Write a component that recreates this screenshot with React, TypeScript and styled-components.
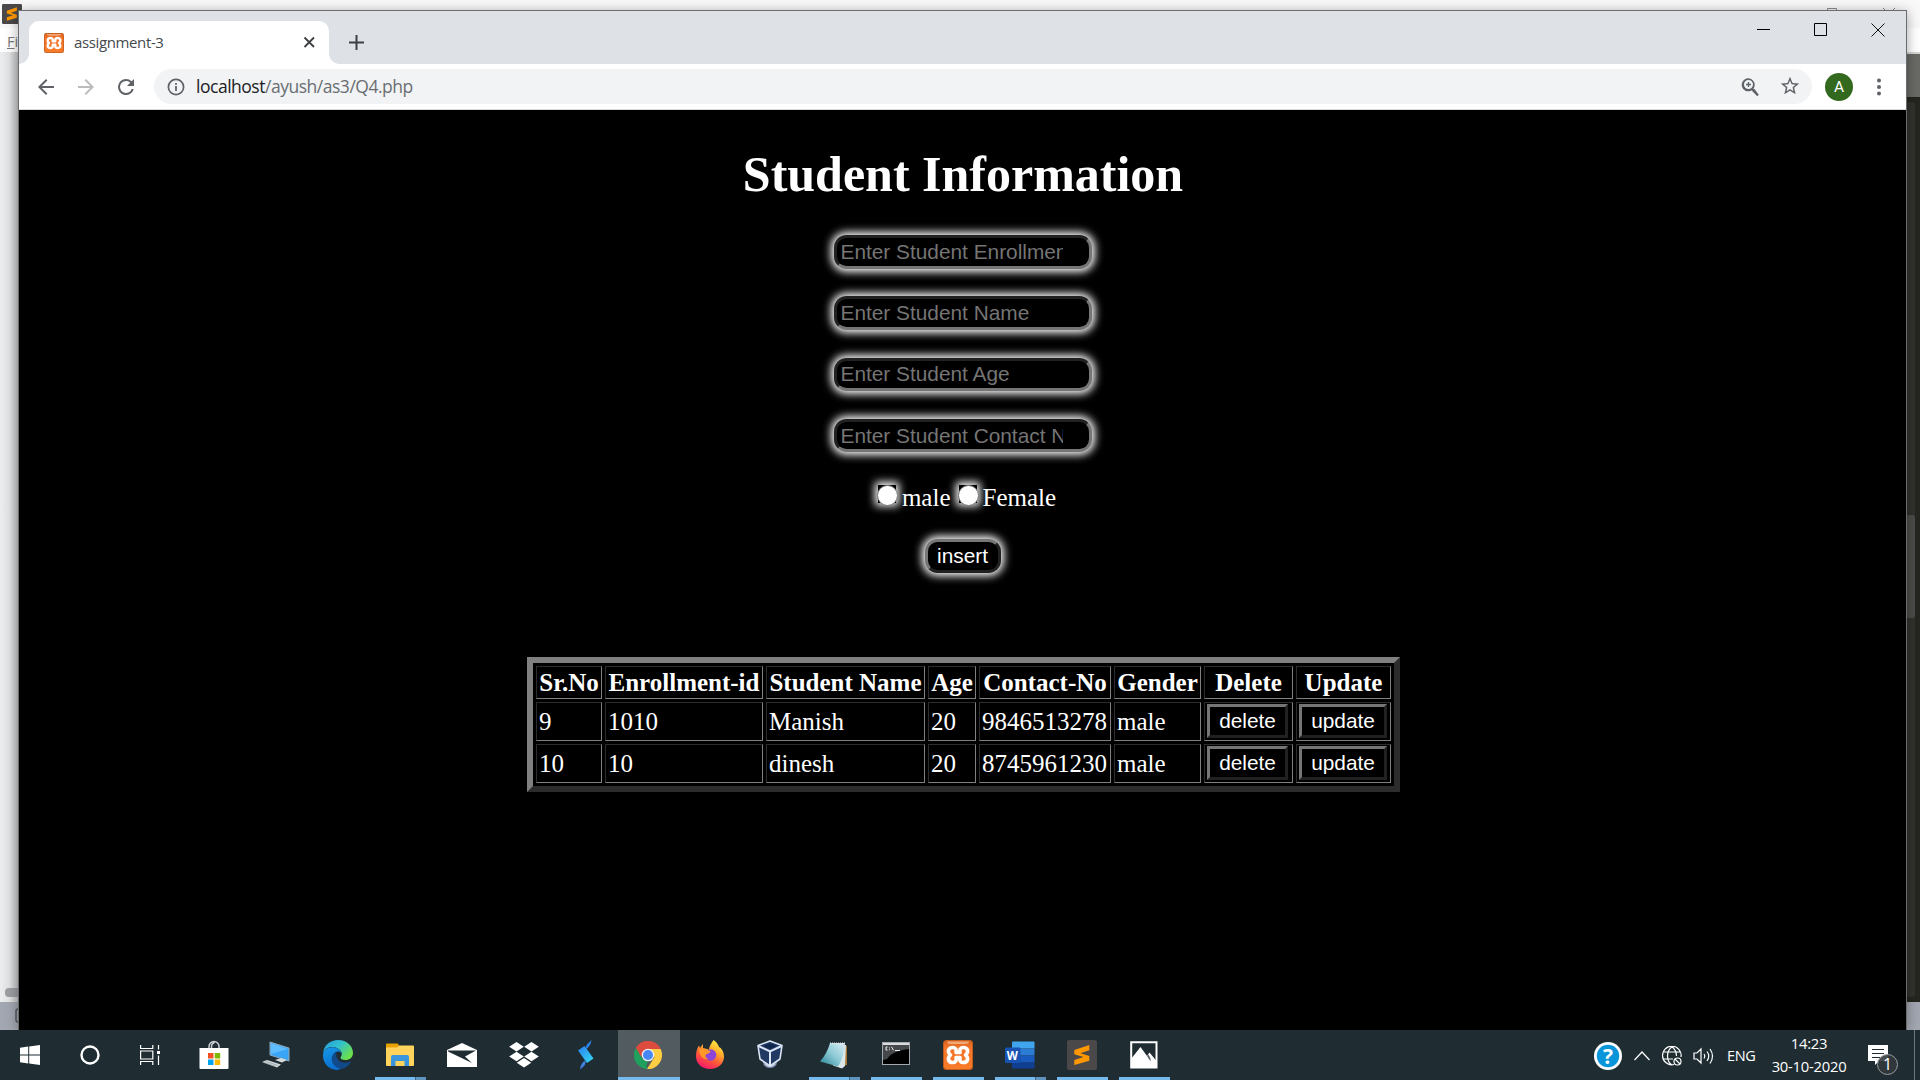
import React from 'react';
import styled, { createGlobalStyle } from 'styled-components';

const Global = createGlobalStyle`
  html, body { margin: 0; height: 100%; overflow: hidden; background: #000; }
  * { box-sizing: border-box; }
`;

const ui = `"Open Sans", "Noto Sans", sans-serif`;

const Desktop = styled.div`
  position: relative;
  width: 1920px;
  height: 1080px;
  overflow: hidden;
  display: flex;
  flex-direction: column;
`;

/* ---------- editor window behind the browser ---------- */
const Editor = styled.div`
  flex: 1;
  display: flex;
  flex-direction: column;
  background: #fff;
  font-family: ${ui};
`;
const EditorTitle = styled.div`
  height: 28px;
  padding: 4px 0 0 2px;
  display: flex;
  gap: 8px;
  color: #777;
  font-size: 15px;
  line-height: 16px;
  background: #f9f9f9;
`;
const EditorTitleText = styled.span`
  padding-top: 3px;
  font-size: 15px;
  letter-spacing: 0.6px;
  white-space: nowrap;
`;
const EditorControls = styled.div`
  margin-left: auto;
  padding: 4px 25px 0 0;
  display: flex;
  gap: 46px;
`;
const EditorMenu = styled.div`
  height: 24px;
  padding: 4px 0 0 7px;
  font-size: 14.5px;
  line-height: 20px;
  color: #777;
`;
const EditorBody = styled.div`
  flex: 1;
  display: flex;
  justify-content: space-between;
`;
const EditorSidebar = styled.div`
  width: 60px;
  background: linear-gradient(90deg, #ecedee 0, #e2e3e4 9px, #bfc0c1 19px);
  display: flex;
  flex-direction: column;
  justify-content: flex-end;
  padding: 0 0 5px 5px;
`;
const SidebarScroll = styled.div`
  height: 9px;
  border-radius: 4px;
  background: #9b9ea3;
`;
const EditorCode = styled.div`
  width: 60px;
  display: flex;
  flex-direction: column;
  background: #25261f;
`;
const CodeTabs = styled.div`
  height: 45px;
  background: #696965;
  border-top: 2px solid #d5d5d5;
`;
const CodeTrack = styled.div`
  flex: 1;
  width: 9px;
  margin: 5px 0 5px 46px;
  padding-top: 413px;
  border-radius: 3px;
  background: #32332e;
`;
const CodeThumb = styled.div`
  height: 103px;
  border-radius: 3px;
  background: #4d4e4b;
`;
const EditorStatus = styled.div`
  height: 28px;
  padding: 5px 0 0 15px;
  background: #a3a7b1;
`;

/* ---------- browser window ---------- */
const Browser = styled.div`
  position: absolute;
  left: 18px;
  top: 10px;
  width: 1889px;
  height: 1020px;
  border: 1px solid #6a6c6e;
  border-bottom: 0;
  background: #000;
  display: flex;
  flex-direction: column;
  box-shadow: 0 2px 12px rgba(0, 0, 0, 0.35);
`;
const TabStrip = styled.div`
  height: 53px;
  background: #dee1e6;
  display: flex;
  align-items: flex-end;
  font-family: ${ui};
`;
const TabCurve = styled.div<{ $side: 'left' | 'right' }>`
  width: 10px;
  height: 10px;
  background: radial-gradient(circle at ${p => (p.$side === 'left' ? '0 0' : '10px 0')}, transparent 9.5px, #fff 10px);
`;
const Tab = styled.div`
  width: 300px;
  height: 43px;
  padding: 0 13px 0 15px;
  border-radius: 10px 10px 0 0;
  background: #fff;
  display: flex;
  align-items: center;
`;
const TabTitle = styled.span`
  flex: 1;
  margin: 0 0 2px 10px;
  font-size: 15px;
  letter-spacing: -0.37px;
  color: #45494d;
`;
const NewTab = styled.div`
  height: 43px;
  margin-left: 10px;
  display: flex;
  align-items: center;
`;
const WindowControls = styled.div`
  height: 53px;
  margin-left: auto;
  padding: 12px 21px 0 0;
  display: flex;
  gap: 43.5px;
`;
const Toolbar = styled.div`
  height: 46px;
  padding: 0 17px 0 15px;
  background: #fff;
  border-bottom: 1px solid #d9dbdd;
  display: flex;
  align-items: center;
  font-family: ${ui};
`;
const NavButtons = styled.div`
  width: 120px;
  display: flex;
  align-items: center;
  gap: 16px;
`;
const Omnibox = styled.div`
  width: 1658px;
  height: 35px;
  padding: 0 11px 0 13px;
  border-radius: 18px;
  background: #f1f3f4;
  display: flex;
  align-items: center;
`;
const Url = styled.span`
  flex: 1;
  margin: 0 0 1px 11px;
  font-size: 17.5px;
  letter-spacing: -0.48px;
  color: #6a6e72;
  b { font-weight: 400; color: #202124; }
`;
const OmniIcons = styled.div`
  display: flex;
  gap: 16px;
`;
const Avatar = styled.div`
  width: 28px;
  height: 28px;
  margin-left: 13px;
  border-radius: 50%;
  background: #33691e;
  color: #fff;
  font: 15.5px/28px Roboto, sans-serif;
  text-align: center;
`;
const MenuDots = styled.div`
  margin-left: auto;
  display: flex;
`;

/* ---------- page ---------- */
const Page = styled.main`
  flex: 1;
  background: #000;
  color: #fff;
  display: flex;
  flex-direction: column;
  align-items: center;
  font: 25px/29px "Liberation Serif", "Times New Roman", serif;
`;
const Heading = styled.h1`
  margin: 36px 0 32px 1px;
  font-size: 50px;
  line-height: 57px;
  font-weight: 700;
`;
const Form = styled.form`
  display: flex;
  flex-direction: column;
  align-items: center;
`;
const Field = styled.input`
  width: 258px;
  height: 33.5px;
  margin-bottom: 27.8px;
  padding: 0 26px 0 4px;
  border: 3px solid;
  border-color: #212121 #767676 #767676 #212121;
  border-radius: 12.5px;
  background: #000;
  color: #fff;
  font: 20.83px "Liberation Sans", Arial, sans-serif;
  box-shadow: 0 0 8px 3px #fff;
  outline: none;
  &::placeholder { color: #757575; opacity: 1; }
`;
const Genders = styled.div`
  height: 29px;
  margin: 3px 0 0 9px;
  display: flex;
  gap: 8px;
`;
const GenderLabel = styled.label`
  display: flex;
  gap: 6px;
`;
const Radio = styled.span`
  width: 18px;
  height: 18px;
  margin-top: 2px;
  background: #000;
  box-shadow: 0 0 8px 3px #fff;
  &::before {
    content: '';
    display: block;
    width: 19px;
    height: 19px;
    margin: -0.5px;
    border: 1px solid #767676;
    border-radius: 50%;
    background: #fff;
  }
`;
const Button = styled.button<{ $glow?: boolean; $w: number }>`
  display: block;
  width: ${p => p.$w}px;
  height: 34px;
  padding: 0;
  border: 3px solid;
  border-color: #767676 #212121 #212121 #767676;
  border-radius: ${p => (p.$glow ? '12.5px' : '0')};
  background: #000;
  color: #fff;
  font: 20.83px "Liberation Sans", Arial, sans-serif;
  box-shadow: ${p => (p.$glow ? '0 0 8px 3px #fff' : 'none')};
`;
const Submit = styled.div`
  margin-top: 27px;
`;
const Table = styled.table`
  width: 873px;
  margin: 84px 0 0 2px;
  table-layout: fixed;
  border: 6px solid;
  border-color: #808080 #2c2c2c #2c2c2c #808080;
  border-collapse: separate;
  border-spacing: 3px;
`;
const Row = styled.tr<{ $h: number }>`
  height: ${p => p.$h}px;
`;
const cell = `
  padding: 1px 2px 2px;
  border: 1px solid;
  border-color: #2c2c2c #808080 #808080 #2c2c2c;
  white-space: nowrap;
`;
const Th = styled.th`
  ${cell}
  padding: 0;
  text-align: center;
`;
const Td = styled.td`
  ${cell}
`;

/* ---------- taskbar ---------- */
const Taskbar = styled.div`
  position: relative;
  height: 50px;
  background: #1f2d33;
  display: flex;
  color: #fff;
  font-family: ${ui};
`;
const Slot = styled.div<{ $w?: number; $active?: boolean }>`
  width: ${p => p.$w ?? 62}px;
  height: 50px;
  background: ${p => (p.$active ? '#515b60' : 'transparent')};
  display: flex;
  flex-direction: column;
  align-items: center;
`;
const IconBox = styled.div`
  height: 47px;
  padding-top: 3px;
  display: flex;
  align-items: center;
  margin-right: 1px;
`;
const AppIcon = styled(IconBox)`
  padding-top: 2px;
  margin-right: 2px;
`;
const RunBar = styled.div<{ $w: number; $split?: boolean }>`
  width: ${p => p.$w}px;
  height: 3px;
  margin-right: ${p => (p.$w > 60 ? 0 : 1)}px;
  background: ${p => (p.$split ? 'linear-gradient(90deg, #76b9ed 40px, #3f6684 40px, #3f6684 41px, #5f94bd 41px)' : '#76b9ed')};
`;
const Start = styled.div`
  width: 184px;
  display: flex;
`;
const Tray = styled.div`
  margin-left: auto;
  width: 326px;
  display: flex;
  align-items: center;
`;
const TrayIcons = styled.div`
  display: flex;
  align-items: center;
  gap: 11px;
  padding-top: 1px;
`;
const Lang = styled.span`
  width: 28px;
  margin-left: 12px;
  font-size: 14.5px;
  letter-spacing: -0.4px;
  white-space: nowrap;
`;
const Clock = styled.div`
  width: 76px;
  margin-left: 16px;
  text-align: center;
  font-size: 14.8px;
  letter-spacing: -0.25px;
  line-height: 23px;
  white-space: nowrap;
`;
const Notify = styled.div`
  position: relative;
  margin-left: 21px;
  height: 50px;
  padding-top: 15px;
`;
const Badge = styled.span`
  position: absolute;
  left: 9px;
  top: 24px;
  width: 21px;
  height: 21px;
  border: 1px solid #999da0;
  border-radius: 50%;
  background: rgba(50, 56, 60, 0.9);
  font-size: 16px;
  line-height: 19px;
  text-align: center;
`;
const ShowDesktop = styled.div`
  width: 6px;
  height: 50px;
  margin-left: auto;
  border-left: 1px solid #6d777b;
`;

/* ---------- icons ---------- */
const Xampp = ({ s = 30 }: { s?: number }) => (
  <svg width={s} height={s} viewBox="0 0 30 30">
    <defs>
      <linearGradient id="xg" x1="0" y1="0" x2="0" y2="1">
        <stop offset="0" stopColor="#d9651f" /><stop offset=".25" stopColor="#f4752a" /><stop offset="1" stopColor="#f87b28" />
      </linearGradient>
    </defs>
    <rect width="30" height="30" rx="3.5" fill="#c05c1c" />
    <rect x="1" y="1" width="28" height="28" rx="3" fill="url(#xg)" />
    <path d="M4 1.500h22q0 2.500-4 2.500H8Q4 4 4 1.500z" fill="#f3a777" />
    <path d="M10 7.500C5 7.500 4 12 7.500 15 4 18 5 22.500 10 22.500 13 22.500 13.500 20 13 17.500H17C16.500 20 17 22.500 20 22.500 25 22.500 26 18 22.500 15 26 12 25 7.500 20 7.500 17 7.500 16.500 10 17 12.500H13C13.500 10 13 7.500 10 7.500z" fill="none" stroke="#fff" strokeWidth="3.600" strokeLinejoin="round" />
  </svg>
);

const Sublime = ({ s = 30 }: { s?: number }) => (
  <svg width={s} height={s} viewBox="0 0 30 30">
    <rect width="30" height="30" rx="2" fill="#4a4848" />
    <path d="M7.300 10 22.300 5v5.300l-9 3 9 2.700v4.800L7.300 25v-5l9.200-3-9.200-2.800z" fill="#ff9800" />
  </svg>
);

const WinLogo = () => (
  <svg width="20" height="20" viewBox="0 0 20 20" fill="#fff">
    <path d="M0 2.700 8.200 1.500V9.400H0zM9.200 1.400 20 0V9.400H9.200zM0 10.400H8.200v8L0 17.200zM9.200 10.400H20V20L9.200 18.600z" />
  </svg>
);
const TaskView = () => (
  <svg width="21" height="20" viewBox="0 0 21 20" fill="none" stroke="#fff" strokeWidth="1.200">
    <path d="M.6 0v3.500h12.200V0M.6 20v-3.500h12.200V20M.6 6h12.200v8H.6zM18.500 0v4.500M18.500 10.500V20" />
    <path d="M17 6h3v3h-3z" fill="#fff" stroke="none" />
  </svg>
);
const Store = () => (
  <svg width="30" height="30" viewBox="0 0 30 30">
    <path d="M10 8V6.500a5 5 0 0 1 10 0V8M12.500 8V6a4 4 0 0 1 3-3.500" fill="none" stroke="#c9ced0" strokeWidth="1.500" />
    <path d="M.5 8h29v20a1 1 0 0 1-1 1h-27a1 1 0 0 1-1-1z" fill="#fff" />
    <path d="M9 13h5.500v5.500H9z" fill="#f25022" /><path d="M15.700 13h5.500v5.500h-5.500z" fill="#7fba00" />
    <path d="M9 19.500h5.500V25H9z" fill="#00a4ef" /><path d="M15.700 19.500h5.500V25h-5.500z" fill="#ffb900" />
  </svg>
);
const Computer = () => (
  <svg width="30" height="28" viewBox="0 0 30 28">
    <path d="M9 1 28 7v13L9 14z" fill="#3aa5f5" stroke="#90a7b5" strokeWidth="1" />
    <path d="m10 2 17 6-17 5z" fill="#5fbcff" />
    <path d="m14 19 6-2 6 2-5 2.500zM1 21l5-2 14 4.500-4 3z" fill="#d5dadd" />
    <path d="m5 20.500 12 4M3 21.500l12 4" stroke="#8d979d" strokeWidth=".7" />
  </svg>
);
const Edge = () => (
  <svg width="30" height="30" viewBox="0 0 30 30">
    <defs>
      <linearGradient id="e1" x1="0" y1="0" x2="1" y2=".6">
        <stop offset="0" stopColor="#259bd9" /><stop offset=".5" stopColor="#30bfd0" /><stop offset="1" stopColor="#6ae04b" />
      </linearGradient>
      <linearGradient id="e2" x1="0" y1="0" x2=".4" y2="1">
        <stop offset="0" stopColor="#1598e8" /><stop offset="1" stopColor="#0a6fd0" />
      </linearGradient>
    </defs>
    <path d="M0 13C1 5 7.500 0 15 0 24 0 30 6 30 13c0 4.500-3.500 7-7.500 7-3.500 0-5.300-1.500-5-2.500.4-.8 1.300-1.700 1.300-3.700C18.800 10 14 7 9 7 4.500 7 1.500 9.500 0 13z" fill="url(#e1)" />
    <path d="M0 15.500C0 10 4.500 7.300 9 7.300c5 0 9 2.700 9.500 6-1-1.300-2.500-2-4-1.800-3.500.5-6 4.500-4.500 9 1.200 4 4.500 7 9 7.500-1.500 1-3 1.700-5 1.900C6 29.800 0 23.500 0 15.500z" fill="url(#e2)" />
    <path d="M13.500 12.200C8 14 7.500 21 11 25c2.200 2.800 5.500 4.200 9 3.600 3.500-1.300 6-3.500 7.600-6.200.3-.6-.1-1-.7-.7C19 25 12 20 13.500 12.200z" fill="#114a8b" />
  </svg>
);
const Explorer = () => (
  <svg width="28" height="24" viewBox="0 0 28 24">
    <path d="M0 1.500Q0 .5 1 .5h10.500l1.500 1.500-1.500 3H0z" fill="#e8a200" />
    <path d="M0 4.500h11L13 2.500h14a1 1 0 0 1 1 1V22a1 1 0 0 1-1 1H1a1 1 0 0 1-1-1z" fill="#ffd35c" />
    <path d="M5 23V14a2 2 0 0 1 2-2h14a2 2 0 0 1 2 2v9h-4.500v-5h-9v5z" fill="#3a95dd" />
  </svg>
);
const Mail = () => (
  <svg width="30" height="24" viewBox="0 0 30 24">
    <path d="M0 7 15 0l15 7v17H0z" fill="#fff" /><path d="M1 7.500h28l-11 6 7 6.500L1 8.500z" fill="#1f2d33" />
  </svg>
);
const Dropbox = () => (
  <svg width="30" height="26" viewBox="0 0 30 26" fill="#fff">
    <path d="m7.500 0 7.300 4.700-7.300 4.700L.2 4.700zM22.500 0l7.300 4.700-7.300 4.700-7.300-4.700zM7.500 9.800l7.300 4.700-7.300 4.700-7.300-4.700zM22.500 9.800l7.300 4.700-7.300 4.700-7.300-4.700zM15 16l7.300 4.700-7.300 4.700-7.300-4.700z" />
  </svg>
);
const SApp = () => (
  <svg width="16" height="30" viewBox="0 0 16 30">
    <defs><linearGradient id="sg" x1="0" y1="0" x2="1" y2="1"><stop offset="0" stopColor="#2b7ff0" /><stop offset="1" stopColor="#35dcf5" /></linearGradient></defs>
    <path d="M13.500 0C13 4 11.500 6.500 8.500 9 7.500 7.500 8 6 9 4.500 10 3 12 2 13.500 0z" fill="#2c86e8" />
    <path d="M0 10.500 6.500 6l9 12.500L9 23z" fill="url(#sg)" />
    <path d="M2 29.500C2.500 25 4 22 7 20.500c1 1.500.5 3.500-.5 5C5.500 27 3.500 28 2 29.500z" fill="#3f7fe0" />
  </svg>
);
const Chrome = () => (
  <svg width="28" height="28" viewBox="0 0 28 28">
    <path d="M1.900 7A14 14 0 0 1 26.100 7L14 14z" fill="#dd4b3e" />
    <path d="M1.900 7 8.500 17.500 14 28A14 14 0 0 1 1.900 7z" fill="#1fa05c" />
    <path d="M26.700 8A14 14 0 0 1 13 28l7.500-12L14 8z" fill="#ffcd42" />
    <path d="M1.900 7A14 14 0 0 1 26.700 8H14l-7 8z" fill="#dd4b3e" />
    <path d="M1.900 7 8 17.500 14 20.500l-3 7.200A14 14 0 0 1 1.900 7z" fill="#1fa05c" />
    <circle cx="14" cy="14" r="6.300" fill="#f1f1f1" /><circle cx="14" cy="14" r="5" fill="#4687f4" />
  </svg>
);
const Firefox = () => (
  <svg width="30" height="30" viewBox="0 0 30 30">
    <defs>
      <linearGradient id="ff" x1=".8" y1="0" x2=".3" y2="1"><stop offset="0" stopColor="#fff44f" /><stop offset=".35" stopColor="#ffb02a" /><stop offset=".65" stopColor="#ff5a38" /><stop offset="1" stopColor="#f5156c" /></linearGradient>
    </defs>
    <path d="M18.500 0c3 2 4.500 4 5.500 7 2.500 1 5 5 5 9.500C29 24 23 29 15 29S1 23.500 1 16.500C1 12 2 8 4 5.500L5 8l3-4v4l6 1.500C14.500 5.500 16.500 3 18.500 0z" fill="url(#ff)" />
    <circle cx="15.500" cy="15" r="5.800" fill="#8c45d8" />
    <path d="M4 10c3-2 6-1.500 8 0l3.500 1c0 2-3 2.500-4.500 3.500-1.500 2 .5 4 2.500 4.500-3 1-7-1-8-4z" fill="#ff9826" />
  </svg>
);
const VBox = () => (
  <svg width="30" height="29" viewBox="0 0 30 29">
    <path d="M6 22c0 8 14 8 14 0z" fill="#7283a8" /><path d="M8 24c1 3 9 3 10 0" stroke="#dfe7f5" fill="none" />
    <path d="M13 1 25 5.500 23 19l-10 7L3 19 1 5.500z" fill="#213a63" stroke="#dbe5f3" strokeWidth="1.600" strokeLinejoin="round" />
    <path d="M1.500 6 13 11.500 24.500 6M13 11.500V26" stroke="#dbe5f3" strokeWidth="2" fill="none" />
    <path d="m13 3.500 7 2.500-7 3-7-3z" fill="#10254a" />
  </svg>
);
const Notepad = () => (
  <svg width="28" height="28" viewBox="0 0 28 28">
    <defs><linearGradient id="np" x1="0" y1="1" x2="1" y2="0"><stop offset="0" stopColor="#237f91" /><stop offset=".5" stopColor="#8bc9d6" /><stop offset="1" stopColor="#d7edf2" /></linearGradient></defs>
    <path d="m24 4 3 1v19l-5 1z" fill="#a9772e" />
    <path d="M10 2 26 4l-1 21-3 2.500-9-3z" fill="#dbe6e8" />
    <path d="M10 2h14.500c0 8-2 17-6.500 23.500L0 20.500C5 15 8 9 10 2z" fill="url(#np)" />
    <path d="M10 2.500h15" stroke="#e5e5e5" strokeWidth="2" strokeDasharray="1 1" />
  </svg>
);
const Cmd = () => (
  <svg width="28" height="25" viewBox="0 0 28 25">
    <rect x=".5" y=".5" width="27" height="22" fill="#000" stroke="#a5a9ab" />
    <path d="M1 3h26v4C17 8 9 11 5 17l-4 1z" fill="#45494b" /><path d="M1 1h26v2H1z" fill="#d9dcde" />
    <path d="M5.500 5H4v3h1.500M7.500 5.500v.8M7.500 7.300v.8M9.500 4.800l2 3.500M13 8.500h5" stroke="#eee" fill="none" />
  </svg>
);
const WordLetter = styled.text`
  font: 700 11.5px "Open Sans", sans-serif;
  fill: #fff;
`;
const Word = () => (
  <svg width="30" height="28" viewBox="0 0 30 28">
    <path d="M7 1.500Q7 .5 8 .5h20.500q1 0 1 1V7.500H7z" fill="#41a5ee" /><path d="M7 7.500h22.500v7H7z" fill="#2b7cd3" />
    <path d="M7 14.500h22.500v7H7z" fill="#185abd" /><path d="M7 21.500h22.500v5q0 1-1 1H8q-1 0-1-1z" fill="#103f91" />
    <rect y="6.500" width="15.500" height="15.500" rx="1.200" fill="#1853b3" />
    <WordLetter x="1.700" y="18.500">W</WordLetter>
  </svg>
);
const Photos = () => (
  <svg width="28" height="28" viewBox="0 0 28 28">
    <path d="M1.200 1.200h25.300v25.300H1.200z" fill="#1f2d33" stroke="#fff" strokeWidth="2" />
    <path d="M1 18 10.500 6 17 15l2.500-3.500L26.500 20v7H1z" fill="#fff" />
    <path d="m17 15 3.500 5.500v-3l-2-4z" fill="#5b666b" />
  </svg>
);
const QMark = styled.text`
  font: 700 21px "Open Sans", sans-serif;
  fill: #fff;
`;
const Help = () => (
  <svg width="28" height="28" viewBox="0 0 28 28">
    <circle cx="14" cy="14" r="14" fill="#fff" /><circle cx="14" cy="14" r="11.200" fill="#0a94d9" />
    <QMark x="14" y="21.500" textAnchor="middle">?</QMark>
  </svg>
);
const TrayGlyph = ({ w, d, h = 20 }: { w: number; h?: number; d: string }) => (
  <svg width={w} height={h} viewBox={`0 0 ${w} ${h}`} fill="none" stroke="#fff" strokeWidth="1.200"><path d={d} /></svg>
);
const Glyph = ({ d, color = '#5f6368', s = 24 }: { d: string; color?: string; s?: number }) => (
  <svg width={s} height={s} viewBox="0 0 24 24" fill={color}><path d={d} /></svg>
);
const Info = () => (
  <svg width="18" height="18" viewBox="0 0 18 18">
    <circle cx="9" cy="9" r="7.600" fill="none" stroke="#5f6368" strokeWidth="1.700" />
    <path d="M8.100 8h1.800v5H8.100zM8.100 5h1.800v1.800H8.100z" fill="#5f6368" />
  </svg>
);

const fields = ['Enter Student Enrollment', 'Enter Student Name', 'Enter Student Age', 'Enter Student Contact No'];
const columns: [string, number][] = [
  ['Sr.No', 66], ['Enrollment-id', 158], ['Student Name', 159], ['Age', 48],
  ['Contact-No', 132], ['Gender', 87], ['Delete', 89], ['Update', 95],
];
const students = [
  ['9', '1010', 'Manish', '20', '9846513278', 'male'],
  ['10', '10', 'dinesh', '20', '8745961230', 'male'],
];
const apps: { icon: React.ReactNode; bar?: 'one' | 'split' | 'active' }[] = [
  { icon: <Store /> }, { icon: <Computer /> }, { icon: <Edge /> }, { icon: <Explorer />, bar: 'split' },
  { icon: <Mail /> }, { icon: <Dropbox /> }, { icon: <SApp /> }, { icon: <Chrome />, bar: 'active' },
  { icon: <Firefox /> }, { icon: <VBox /> }, { icon: <Notepad />, bar: 'split' }, { icon: <Cmd />, bar: 'one' },
  { icon: <Xampp />, bar: 'one' }, { icon: <Word />, bar: 'split' }, { icon: <Sublime />, bar: 'one' }, { icon: <Photos />, bar: 'one' },
];

export default function App() {
  return (
    <Desktop>
      <Global />
      <Editor>
        <EditorTitle>
          <Sublime s={20} />
          <EditorTitleText>C:\xampp\htdocs\ayush\as3\Q4.php - Sublime Text (UNREGISTERED)</EditorTitleText>
          <EditorControls>
            <svg width="10" height="10"><path d="M.5.5h9v9h-9z" fill="none" stroke="#888" /></svg>
            <svg width="12" height="12"><path d="m0 0 12 12M12 0 0 12" stroke="#888" /></svg>
          </EditorControls>
        </EditorTitle>
        <EditorMenu><u>F</u>ile</EditorMenu>
        <EditorBody>
          <EditorSidebar><SidebarScroll /></EditorSidebar>
          <EditorCode>
            <CodeTabs />
            <CodeTrack><CodeThumb /></CodeTrack>
          </EditorCode>
        </EditorBody>
        <EditorStatus>
          <svg width="20" height="18"><rect x="1" y="2" width="18" height="13" rx="2" fill="none" stroke="#565a60" strokeWidth="1.500" /></svg>
        </EditorStatus>
      </Editor>

      <Browser>
        <TabStrip>
          <TabCurve $side="left" />
          <Tab>
            <Xampp s={20} />
            <TabTitle>assignment-3</TabTitle>
            <svg width="13" height="13"><path d="m1.500 1.500 9.500 9.500M11 1.500 1.500 11" stroke="#3c4043" strokeWidth="1.800" /></svg>
          </Tab>
          <TabCurve $side="right" />
          <NewTab><svg width="15" height="15"><path d="M7.500 0v15M0 7.500h15" stroke="#3c4043" strokeWidth="2" /></svg></NewTab>
          <WindowControls>
            <svg width="13" height="13"><path d="M0 6.500h13" stroke="#000" /></svg>
            <svg width="14" height="13"><path d="M.5.5h12v12H.500z" fill="none" stroke="#000" /></svg>
            <svg width="14" height="14"><path d="m.5.5 13 13M13.500.5l-13 13" stroke="#111" /></svg>
          </WindowControls>
        </TabStrip>
        <Toolbar>
          <NavButtons>
            <Glyph d="M20 11H7.830l5.590-5.590L12 4l-8 8 8 8 1.410-1.410L7.830 13H20v-2z" />
            <Glyph color="#babcbe" d="M12 4l-1.410 1.410L16.170 11H4v2h12.170l-5.580 5.590L12 20l8-8z" />
            <Glyph d="M17.650 6.350A7.960 7.960 0 0 0 12 4a8 8 0 1 0 7.730 10h-2.080A6 6 0 1 1 12 6c1.660 0 3.140.69 4.220 1.780L13 11h7V4l-2.350 2.350z" />
          </NavButtons>
          <Omnibox>
            <Info />
            <Url><b>localhost</b>/ayush/as3/Q4.php</Url>
            <OmniIcons>
              <Glyph d="M15.500 14h-.79l-.28-.27A6.500 6.500 0 1 0 13 15.140l.28.27v.79l5 5 1.490-1.490-4.270-5.710zM9.500 14a4.500 4.500 0 1 1 0-9 4.500 4.500 0 0 1 0 9zM10.200 7H8.800v1.800H7v1.400h1.800V12h1.400v-1.800H12V8.800h-1.800z" />
              <Glyph d="M22 9.240l-7.190-.62L12 2 9.190 8.630 2 9.240l5.460 4.730L5.820 21 12 17.270 18.180 21l-1.630-7.030L22 9.240zM12 15.400l-3.760 2.270 1-4.280-3.320-2.880 4.380-.38L12 6.100l1.710 4.040 4.380.38-3.320 2.880 1 4.280L12 15.400z" s={22} />
            </OmniIcons>
          </Omnibox>
          <Avatar>A</Avatar>
          <MenuDots><svg width="20" height="18" fill="#5f6368"><circle cx="10" cy="2.500" r="2" /><circle cx="10" cy="9" r="2" /><circle cx="10" cy="15.500" r="2" /></svg></MenuDots>
        </Toolbar>
        <Page>
          <Heading>Student Information</Heading>
          <Form>
            {fields.map(f => <Field key={f} placeholder={f} />)}
            <Genders>
              <GenderLabel><Radio />male</GenderLabel>
              <GenderLabel><Radio />Female</GenderLabel>
            </Genders>
            <Submit><Button type="button" $glow $w={76}>insert</Button></Submit>
          </Form>
          <Table>
            <colgroup>{columns.map(([n, w]) => <col key={n} width={w} />)}</colgroup>
            <thead><Row $h={33}>{columns.map(([n]) => <Th key={n}>{n}</Th>)}</Row></thead>
            <tbody>
              {students.map(s => (
                <Row key={s[0]} $h={39}>
                  {s.map((v, i) => <Td key={i}>{v}</Td>)}
                  <Td><Button $w={81}>delete</Button></Td>
                  <Td><Button $w={88}>update</Button></Td>
                </Row>
              ))}
            </tbody>
          </Table>
        </Page>
      </Browser>

      <Taskbar>
        <Start>
          <Slot $w={60}><IconBox><WinLogo /></IconBox></Slot>
          <Slot $w={61}><IconBox><svg width="20" height="20"><circle cx="10" cy="10" r="8.500" fill="none" stroke="#fff" strokeWidth="2.400" /></svg></IconBox></Slot>
          <Slot $w={60}><IconBox><TaskView /></IconBox></Slot>
        </Start>
        {apps.map((a, i) => (
          <Slot key={i} $active={a.bar === 'active'}>
            <AppIcon>{a.icon}</AppIcon>
            {a.bar && <RunBar $w={a.bar === 'active' ? 62 : 51} $split={a.bar === 'split'} />}
          </Slot>
        ))}
        <Tray>
          <TrayIcons>
            <Help />
            <TrayGlyph w={18} d="m1.500 14 7.500-8 7.500 8" />
            <TrayGlyph w={20} d="M12 18.500A9.300 9.300 0 1 1 19 11M10 .7C4 5 4 15 10 19M10 .7c3.500 2.800 4.500 6 4.500 9.300M2 6h16M1 13h10M19 15.500a3.500 3.500 0 1 1-7 0 3.500 3.500 0 0 1 7 0M13 13l5 5" />
            <TrayGlyph w={22} d="M1 7h3l4-4v14l-4-4H1zM11 8q1.500 2 0 4.500M14 5.500q3.500 4.500 0 9.500M17 3q5 7 0 14.500" />
          </TrayIcons>
          <Lang>ENG</Lang>
          <Clock>14:23<br />30-10-2020</Clock>
          <Notify>
            <svg width="20" height="20"><path d="M0 0h20v16h-9l-4 4v-4H0z" fill="#fff" /><path d="M4 4.500h12M4 8.500h12M4 12.500h8" stroke="#1f2d33" /></svg>
            <Badge>1</Badge>
          </Notify>
          <ShowDesktop />
        </Tray>
      </Taskbar>
    </Desktop>
  );
}
